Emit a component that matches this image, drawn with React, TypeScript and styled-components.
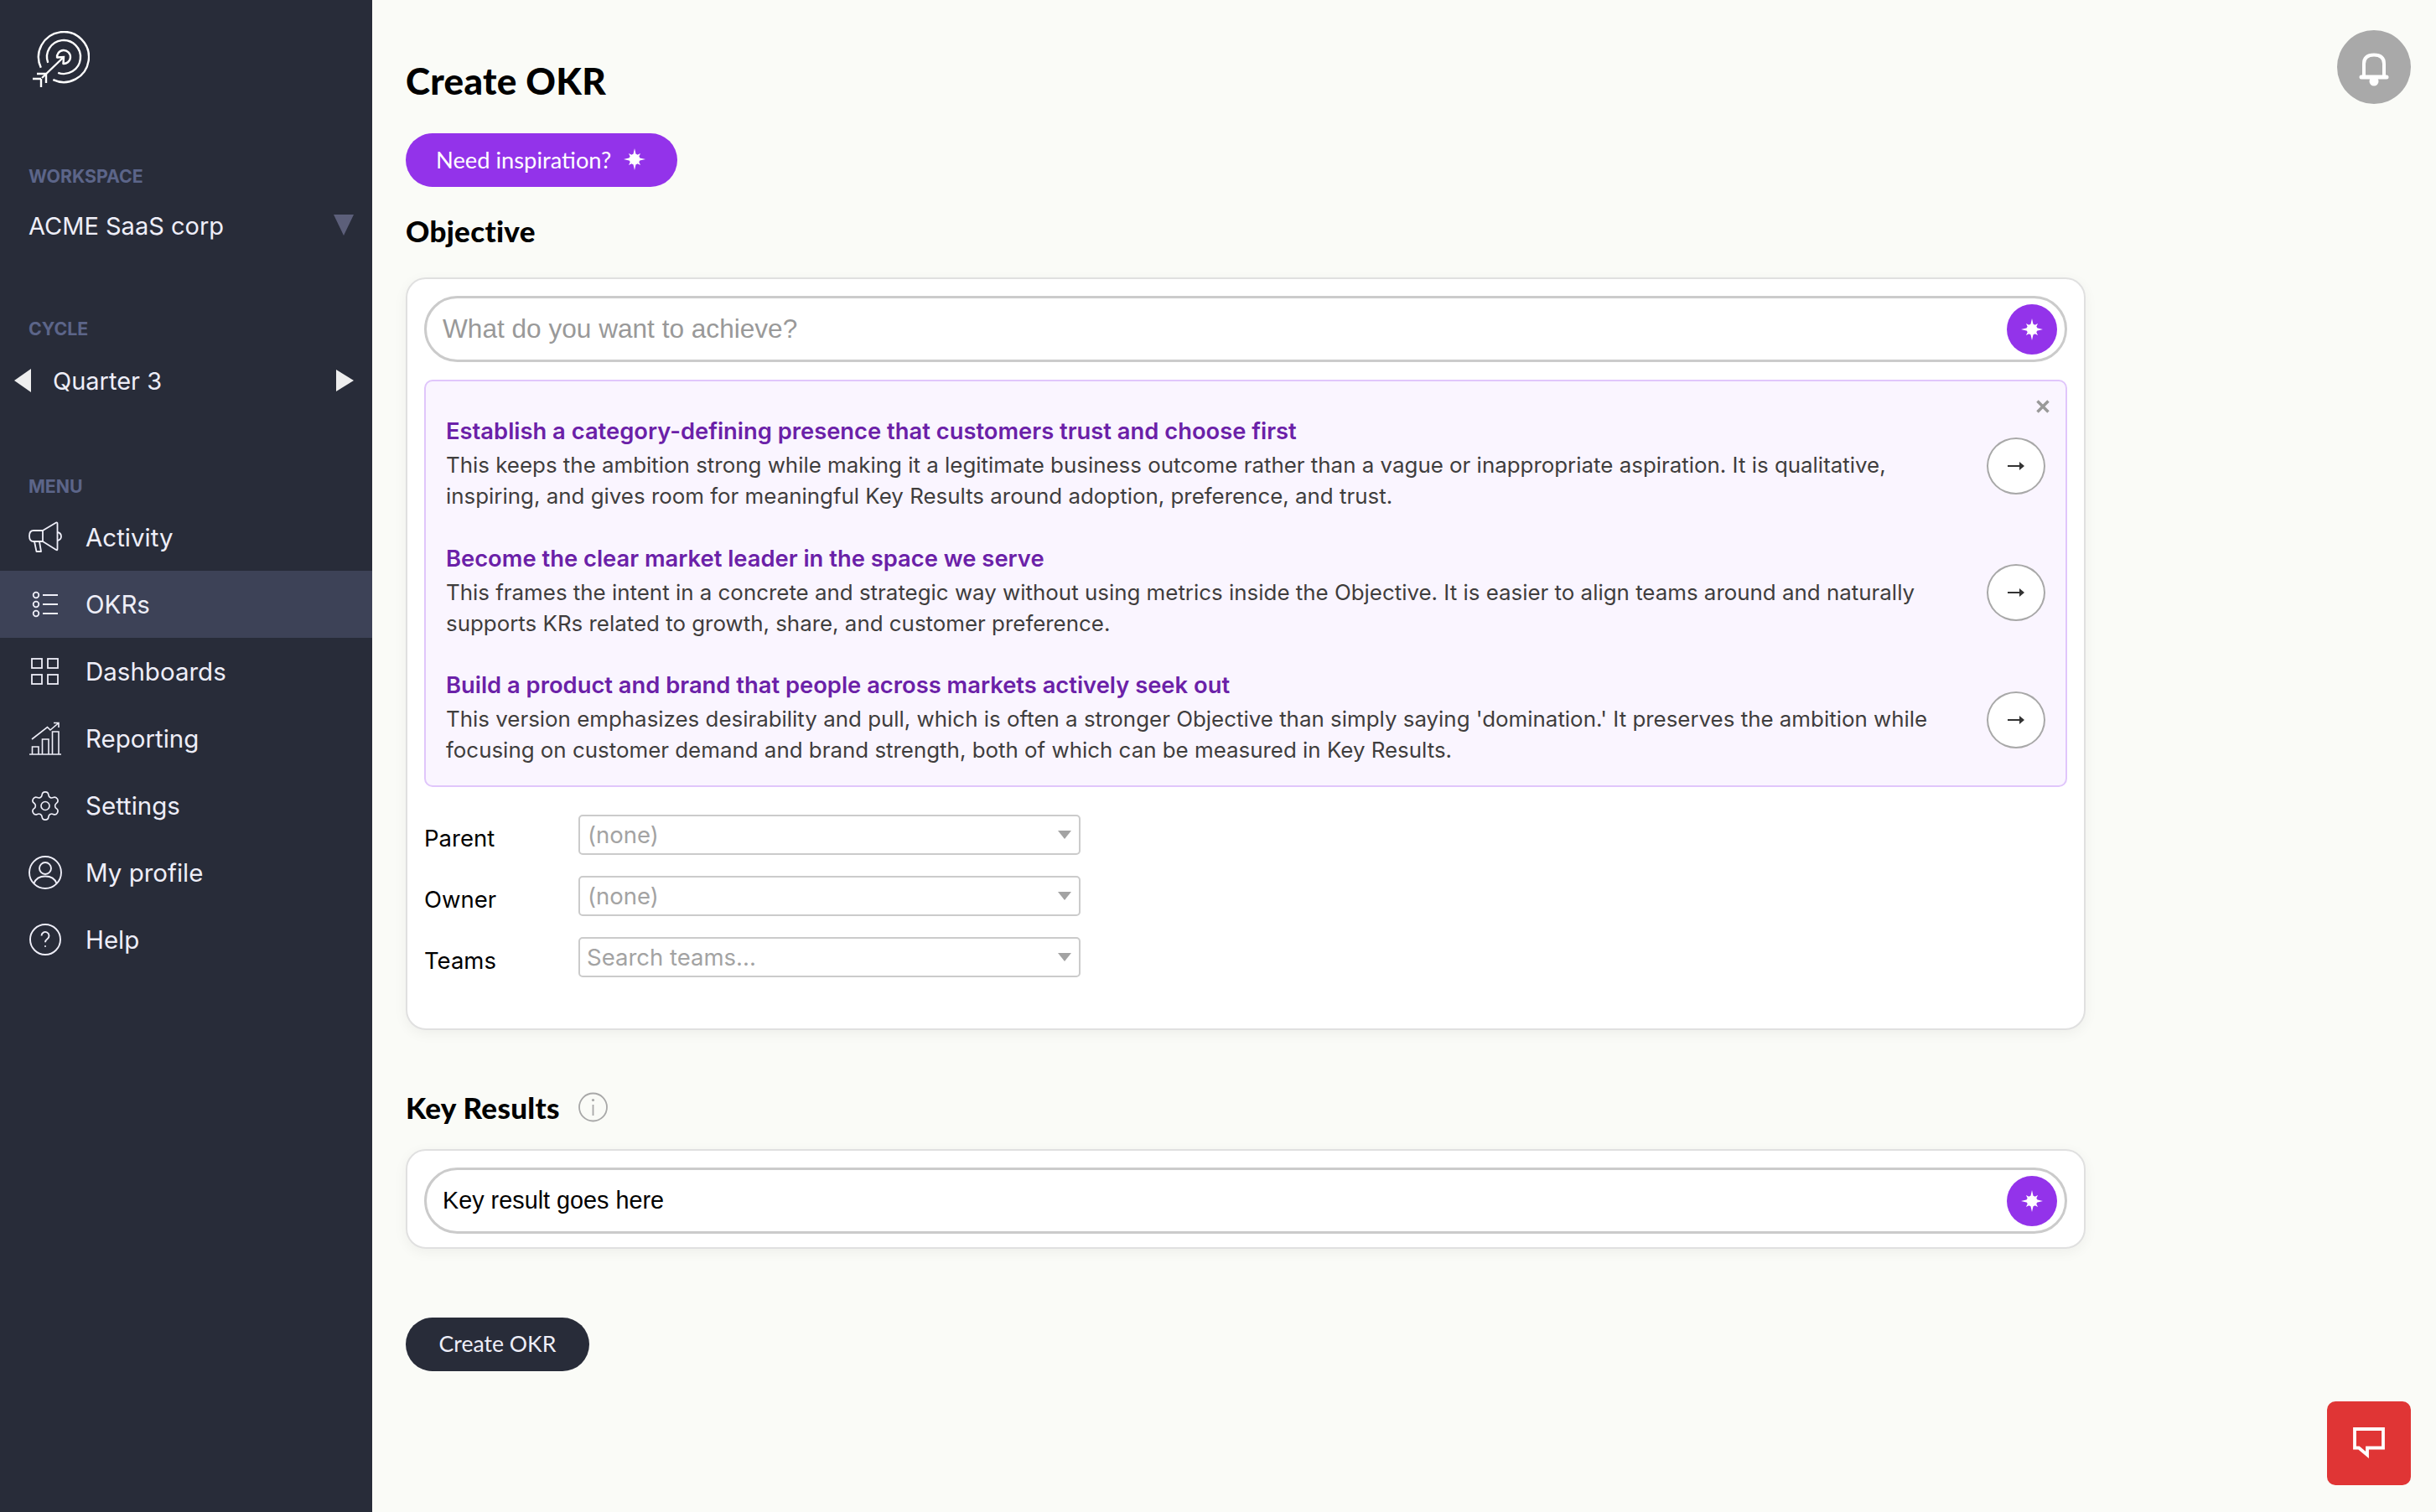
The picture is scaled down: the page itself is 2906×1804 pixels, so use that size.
import React from 'react'
import styled, { createGlobalStyle } from 'styled-components'
import { Settings } from 'lucide-react'

const GlobalStyle = createGlobalStyle`
  html, body {
    margin: 0;
    padding: 0;
    background: #fafbf7;
    font-family: "Inter", "Liberation Sans", sans-serif;
  }
  * { box-sizing: border-box; }
`

const starPoints = Array.from({ length: 16 }, (_, i) => {
  const a = (i * Math.PI) / 8
  const r = i % 4 === 0 ? 13 : i % 4 === 2 ? 10 : 5
  return `${(13 + r * Math.sin(a)).toFixed(2)},${(13 - r * Math.cos(a)).toFixed(2)}`
}).join(' ')

const Star = () => (
  <svg width="26" height="26" viewBox="0 0 26 26" fill="#fff">
    <polygon points={starPoints} />
    <circle cx="13" cy="13" r="6.400" />
  </svg>
)

const Logo = () => (
  <svg width="69" height="68" viewBox="0 0 69 68" fill="none" stroke="#fff" strokeWidth="2.4">
    <path d="M10.8 43.7A30 30 0 1 1 25.3 58.2" />
    <path d="M19.2 37.8A20 20 0 1 1 31.2 49.8" />
    <path d="M30.1 32.4A8 8 0 1 1 36.6 38.9" />
    <path d="M38 31L12 56M30 31.5L38 31L37.5 39" />
    <path d="M17 51H6M17 51V62M11 57H1M11 57V67" />
  </svg>
)

const Megaphone = () => (
  <svg width="40" height="38" viewBox="0 0 40 38" fill="none" stroke="#eeeef8" strokeWidth="1.8" strokeLinejoin="round">
    <path d="M6 11H17L33 1.5Q34.5 1 34.5 3V33Q34.5 35 33 34L17 24H6Q1 24 1 17.5Q1 11 6 11Z" />
    <path d="M17 11V24M7 24L9.5 36H15L13 24" />
    <path d="M34.5 13Q39 14 39 18Q39 22 34.5 23" />
  </svg>
)

const ListIcon = () => (
  <svg width="40" height="40" viewBox="0 0 40 40" fill="none" stroke="#eeeef8" strokeWidth="1.8">
    <circle cx="9" cy="9" r="3.3" />
    <circle cx="9" cy="20" r="3.3" />
    <circle cx="9" cy="31" r="3.3" />
    <path d="M17 9H35M17 20H35M17 31H35" />
  </svg>
)

const GridIcon = () => (
  <svg width="40" height="40" viewBox="0 0 40 40" fill="none" stroke="#eeeef8" strokeWidth="1.8">
    <rect x="4" y="5" width="12" height="11" />
    <rect x="23" y="5" width="12" height="11" />
    <rect x="4" y="24" width="12" height="11" />
    <rect x="23" y="24" width="12" height="11" />
  </svg>
)

const ChartIcon = () => (
  <svg width="40" height="40" viewBox="0 0 40 40" fill="none" stroke="#eeeef8" strokeWidth="1.6">
    <path d="M1 39H39" />
    <path d="M4.5 39V30H12V39M16.500 39V21H24V39M28.500 39V12H36V39" />
    <path d="M4 21L22.500 6.500L26 10L36 1.500M30 1.500H36V7" />
  </svg>
)

const ProfileIcon = () => (
  <svg width="40" height="40" viewBox="0 0 40 40" fill="none" stroke="#eeeef8" strokeWidth="1.9">
    <circle cx="20" cy="20" r="19" />
    <circle cx="20" cy="15" r="7" />
    <path d="M6.500 33C9 26 14 24.500 20 24.500S31 26 33.500 33" />
  </svg>
)

const HelpIcon = () => (
  <svg width="40" height="40" viewBox="0 0 40 40" fill="none" stroke="#eeeef8" strokeWidth="1.9">
    <circle cx="20" cy="20" r="18" />
    <path d="M15.500 15.500a4.500 4.500 0 1 1 7 3.700c-1.600 1.100-2.500 2-2.500 4" />
    <circle cx="20" cy="28" r="1" fill="#eeeef8" stroke="none" />
  </svg>
)

const BellIcon = () => (
  <svg width="48" height="48" viewBox="0 0 48 48" fill="none" stroke="#fff">
    <path d="M12 35V20C12 12 17 9.500 24 9.500S36 12 36 20V35" strokeWidth="4" />
    <path d="M9 36H39" strokeWidth="5" strokeLinecap="round" />
    <circle cx="24" cy="41" r="5.500" fill="#fff" stroke="none" />
  </svg>
)

const ChatIcon = () => (
  <svg width="38" height="38" viewBox="0 0 38 38" fill="none" stroke="#fff" strokeWidth="3.800">
    <path d="M2 2H36V24.500H17V33L7 24.500H2Z" />
  </svg>
)

const ArrowIcon = () => (
  <svg width="22" height="14" viewBox="0 0 22 14" fill="none">
    <path d="M1 7H19" stroke="#333" strokeWidth="2" />
    <path d="M15 2L21 7L15 12Z" fill="#333" />
  </svg>
)

const InfoIcon = () => (
  <svg width="35" height="36" viewBox="0 0 35 36" fill="none" stroke="#a8a8a8" strokeWidth="1.800">
    <circle cx="17.500" cy="18" r="16.500" />
    <path d="M17.500 15V28" />
    <circle cx="17.500" cy="9.500" r="1.600" fill="#a8a8a8" stroke="none" />
  </svg>
)

const Shell = styled.div`
  display: flex;
  width: 100%;
  height: 1804px;
  overflow: hidden;
  position: relative;
`

const Sidebar = styled.aside`
  flex: 0 0 444px;
  background: #282c39;
  color: #eeeef8;
  display: flex;
  flex-direction: column;
  padding-top: 37px;
`

const LogoBox = styled.div`
  padding-left: 38px;
  height: 161px;
`

const SideLabel = styled.div`
  padding-left: 34px;
  font-size: 21.300px;
  line-height: 24px;
  font-weight: 700;
  color: #5c6589;
`

const WorkspaceRow = styled.div`
  display: flex;
  align-items: center;
  justify-content: space-between;
  padding: 0 22px 0 34px;
  height: 60px;
  margin: 17px 0 81px;
  font-size: 29px;
`

const CycleRow = styled.div`
  display: flex;
  align-items: center;
  padding: 0 22px 0 17px;
  height: 60px;
  margin: 20px 0 84px;
  font-size: 29px;
`

const CycleName = styled.span`
  flex: 1;
  padding-left: 26px;
`

const Triangle = styled.span<{ $dir: 'left' | 'right' | 'down' }>`
  width: 0;
  height: 0;
  display: block;
  ${p =>
    p.$dir === 'down'
      ? 'border-left: 12px solid transparent; border-right: 12px solid transparent; border-top: 25px solid #5c5f7a; margin-top: -2px;'
      : p.$dir === 'left'
        ? 'border-top: 14px solid transparent; border-bottom: 14px solid transparent; border-right: 20px solid #eeeeee;'
        : 'border-top: 13px solid transparent; border-bottom: 13px solid transparent; border-left: 21px solid #eeeeee;'}
`

const MenuList = styled.nav`
  display: flex;
  flex-direction: column;
  margin-top: 9px;
`

const MenuRow = styled.div<{ $active?: boolean }>`
  height: 80px;
  display: flex;
  align-items: center;
  gap: 28px;
  padding-left: 34px;
  font-size: 29.500px;
  background: ${p => (p.$active ? '#3d4257' : 'transparent')};
`

const MenuIcon = styled.span`
  width: 40px;
  height: 40px;
  display: flex;
  align-items: center;
  justify-content: center;
`

const Main = styled.main`
  flex: 1;
  padding: 0 0 0 40px;
  display: flex;
  flex-direction: column;
  align-items: flex-start;
`

const Title = styled.h1`
  margin: 68px 0 0;
  font-family: "Lato", sans-serif;
  font-size: 44px;
  line-height: 56px;
  font-weight: 900;
  letter-spacing: 0.3px;
  color: #000;
`

const InspireButton = styled.button`
  margin-top: 35px;
  width: 324px;
  height: 64px;
  border: 0;
  border-radius: 32px;
  background: #9333ea;
  color: #fff;
  font-family: "Lato", sans-serif;
  font-size: 27.300px;
  display: flex;
  align-items: center;
  gap: 15px;
  padding: 0 0 2px 36px;
`

const SectionTitle = styled.h2`
  margin: 0;
  display: flex;
  align-items: center;
  gap: 22px;
  font-family: "Lato", sans-serif;
  font-size: 35px;
  line-height: 44px;
  font-weight: 900;
  letter-spacing: 0.3px;
  color: #000;
`

const ObjectiveHeading = styled.div`
  margin: 30px 0 34px;
`

const Card = styled.section<{ $height: number }>`
  width: 2004px;
  height: ${p => p.$height}px;
  background: #fff;
  border: 2px solid #e0e0e0;
  border-radius: 24px;
  padding: 20px;
  box-shadow: 0 4px 16px rgba(0, 0, 0, 0.05);
  display: flex;
  flex-direction: column;
`

const AskInput = styled.div<{ $filled?: boolean }>`
  height: 79px;
  flex: 0 0 auto;
  border: 3px solid #cbcbcb;
  border-radius: 40px;
  display: flex;
  align-items: center;
  justify-content: space-between;
  padding: 0 9px 0 19px;
  font-family: "Liberation Sans", Arial, sans-serif;
  font-size: ${p => (p.$filled ? '28.800px' : '31.600px')};
  color: ${p => (p.$filled ? '#000' : '#999')};
`

const AskButton = styled.span`
  width: 60px;
  height: 60px;
  border-radius: 50%;
  background: #9333ea;
  display: flex;
  align-items: center;
  justify-content: center;
`

const SuggestBox = styled.div`
  position: relative;
  margin-top: 21px;
  height: 486px;
  background: #faf5ff;
  border: 2px solid #e0c6fb;
  border-radius: 10px;
  padding: 42px 24px 0;
  display: flex;
  flex-direction: column;
  gap: 38.500px;
`

const CloseMark = styled.svg`
  position: absolute;
  top: 22px;
  right: 19px;
`

const SuggestItem = styled.div`
  display: flex;
  align-items: center;
  justify-content: space-between;
`

const SuggestText = styled.div`
  width: 1810px;
`

const SuggestTitle = styled.div`
  font-size: 27.350px;
  line-height: 36px;
  font-weight: 600;
  color: #6b21a8;
`

const SuggestBody = styled.div`
  font-size: 25.900px;
  line-height: 37px;
  color: #3f3d3d;
  margin-top: 3px;
`

const RoundArrow = styled.span`
  flex: 0 0 auto;
  width: 70px;
  height: 68px;
  border-radius: 50%;
  border: 2px solid #a8a8a8;
  background: #fff;
  display: flex;
  align-items: center;
  justify-content: center;
  margin-top: 4px;
`

const FormGrid = styled.div`
  margin-top: 33px;
  display: flex;
  flex-direction: column;
  gap: 25px;
`

const FormRow = styled.div`
  display: flex;
  align-items: center;
`

const FormLabel = styled.label`
  width: 184px;
  font-size: 27.500px;
  color: #000;
  padding-top: 8px;
`

const SelectBox = styled.div<{ $search?: boolean }>`
  width: 599px;
  height: 48px;
  background: #fff;
  border: 2px solid #cbcbcb;
  border-radius: 5px;
  display: flex;
  align-items: center;
  justify-content: space-between;
  padding: 0 9px 0 ${p => (p.$search ? '8px' : '9px')};
  font-size: 27.500px;
  color: #a3a3a3;
`

const SelectCaret = styled.span`
  width: 0;
  height: 0;
  border-left: 8px solid transparent;
  border-right: 8px solid transparent;
  border-top: 10px solid #a3a3a3;
`

const KeyHeading = styled.div`
  margin: 70px 0 28px;
`

const CreateButton = styled.button`
  margin-top: 82px;
  width: 219px;
  height: 64px;
  border: 0;
  border-radius: 32px;
  background: #282c39;
  color: #eeeef8;
  font-family: "Lato", sans-serif;
  font-size: 26.600px;
  padding: 0 0 3px;
`

const BellButton = styled.div`
  position: absolute;
  top: 36px;
  right: 30px;
  width: 88px;
  height: 88px;
  border-radius: 50%;
  background: #a9a9a9;
  display: flex;
  align-items: center;
  justify-content: center;
`

const ChatButton = styled.div`
  position: absolute;
  top: 1672px;
  right: 30px;
  width: 100px;
  height: 100px;
  border-radius: 10px;
  background: #e03535;
  display: flex;
  align-items: center;
  justify-content: center;
`

const menu = [
  { label: 'Activity', icon: <Megaphone /> },
  { label: 'OKRs', icon: <ListIcon />, active: true },
  { label: 'Dashboards', icon: <GridIcon /> },
  { label: 'Reporting', icon: <ChartIcon /> },
  { label: 'Settings', icon: <Settings size={47} strokeWidth={1} color="#eeeef8" /> },
  { label: 'My profile', icon: <ProfileIcon /> },
  { label: 'Help', icon: <HelpIcon /> },
]

const suggestions = [
  {
    title: 'Establish a category-defining presence that customers trust and choose first',
    body: 'This keeps the ambition strong while making it a legitimate business outcome rather than a vague or inappropriate aspiration. It is qualitative, inspiring, and gives room for meaningful Key Results around adoption, preference, and trust.',
  },
  {
    title: 'Become the clear market leader in the space we serve',
    body: 'This frames the intent in a concrete and strategic way without using metrics inside the Objective. It is easier to align teams around and naturally supports KRs related to growth, share, and customer preference.',
  },
  {
    title: 'Build a product and brand that people across markets actively seek out',
    body: "This version emphasizes desirability and pull, which is often a stronger Objective than simply saying 'domination.' It preserves the ambition while focusing on customer demand and brand strength, both of which can be measured in Key Results.",
  },
]

const App: React.FC = () => {
  return (
    <Shell>
      <GlobalStyle />
      <Sidebar>
        <LogoBox>
          <Logo />
        </LogoBox>
        <SideLabel>WORKSPACE</SideLabel>
        <WorkspaceRow>
          ACME SaaS corp
          <Triangle $dir="down" />
        </WorkspaceRow>
        <SideLabel>CYCLE</SideLabel>
        <CycleRow>
          <Triangle $dir="left" />
          <CycleName>Quarter 3</CycleName>
          <Triangle $dir="right" />
        </CycleRow>
        <SideLabel>MENU</SideLabel>
        <MenuList>
          {menu.map(item => (
            <MenuRow key={item.label} $active={item.active}>
              <MenuIcon>{item.icon}</MenuIcon>
              {item.label}
            </MenuRow>
          ))}
        </MenuList>
      </Sidebar>
      <Main>
        <Title>Create OKR</Title>
        <InspireButton>
          Need inspiration?
          <Star />
        </InspireButton>
        <ObjectiveHeading>
          <SectionTitle>Objective</SectionTitle>
        </ObjectiveHeading>
        <Card $height={898}>
          <AskInput>
            What do you want to achieve?
            <AskButton>
              <Star />
            </AskButton>
          </AskInput>
          <SuggestBox>
            <CloseMark width="16" height="16" viewBox="0 0 16 16" stroke="#999" strokeWidth="3.500">
              <path d="M1.500 1.500L14.500 14.500M14.500 1.500L1.500 14.500" />
            </CloseMark>
            {suggestions.map(s => (
              <SuggestItem key={s.title}>
                <SuggestText>
                  <SuggestTitle>{s.title}</SuggestTitle>
                  <SuggestBody>{s.body}</SuggestBody>
                </SuggestText>
                <RoundArrow>
                  <ArrowIcon />
                </RoundArrow>
              </SuggestItem>
            ))}
          </SuggestBox>
          <FormGrid>
            <FormRow>
              <FormLabel>Parent</FormLabel>
              <SelectBox>
                (none)
                <SelectCaret />
              </SelectBox>
            </FormRow>
            <FormRow>
              <FormLabel>Owner</FormLabel>
              <SelectBox>
                (none)
                <SelectCaret />
              </SelectBox>
            </FormRow>
            <FormRow>
              <FormLabel>Teams</FormLabel>
              <SelectBox $search>
                Search teams...
                <SelectCaret />
              </SelectBox>
            </FormRow>
          </FormGrid>
        </Card>
        <KeyHeading>
          <SectionTitle>
            Key Results
            <InfoIcon />
          </SectionTitle>
        </KeyHeading>
        <Card $height={119}>
          <AskInput $filled>
            Key result goes here
            <AskButton>
              <Star />
            </AskButton>
          </AskInput>
        </Card>
        <CreateButton>Create OKR</CreateButton>
      </Main>
      <BellButton>
        <BellIcon />
      </BellButton>
      <ChatButton>
        <ChatIcon />
      </ChatButton>
    </Shell>
  )
}

export default App
